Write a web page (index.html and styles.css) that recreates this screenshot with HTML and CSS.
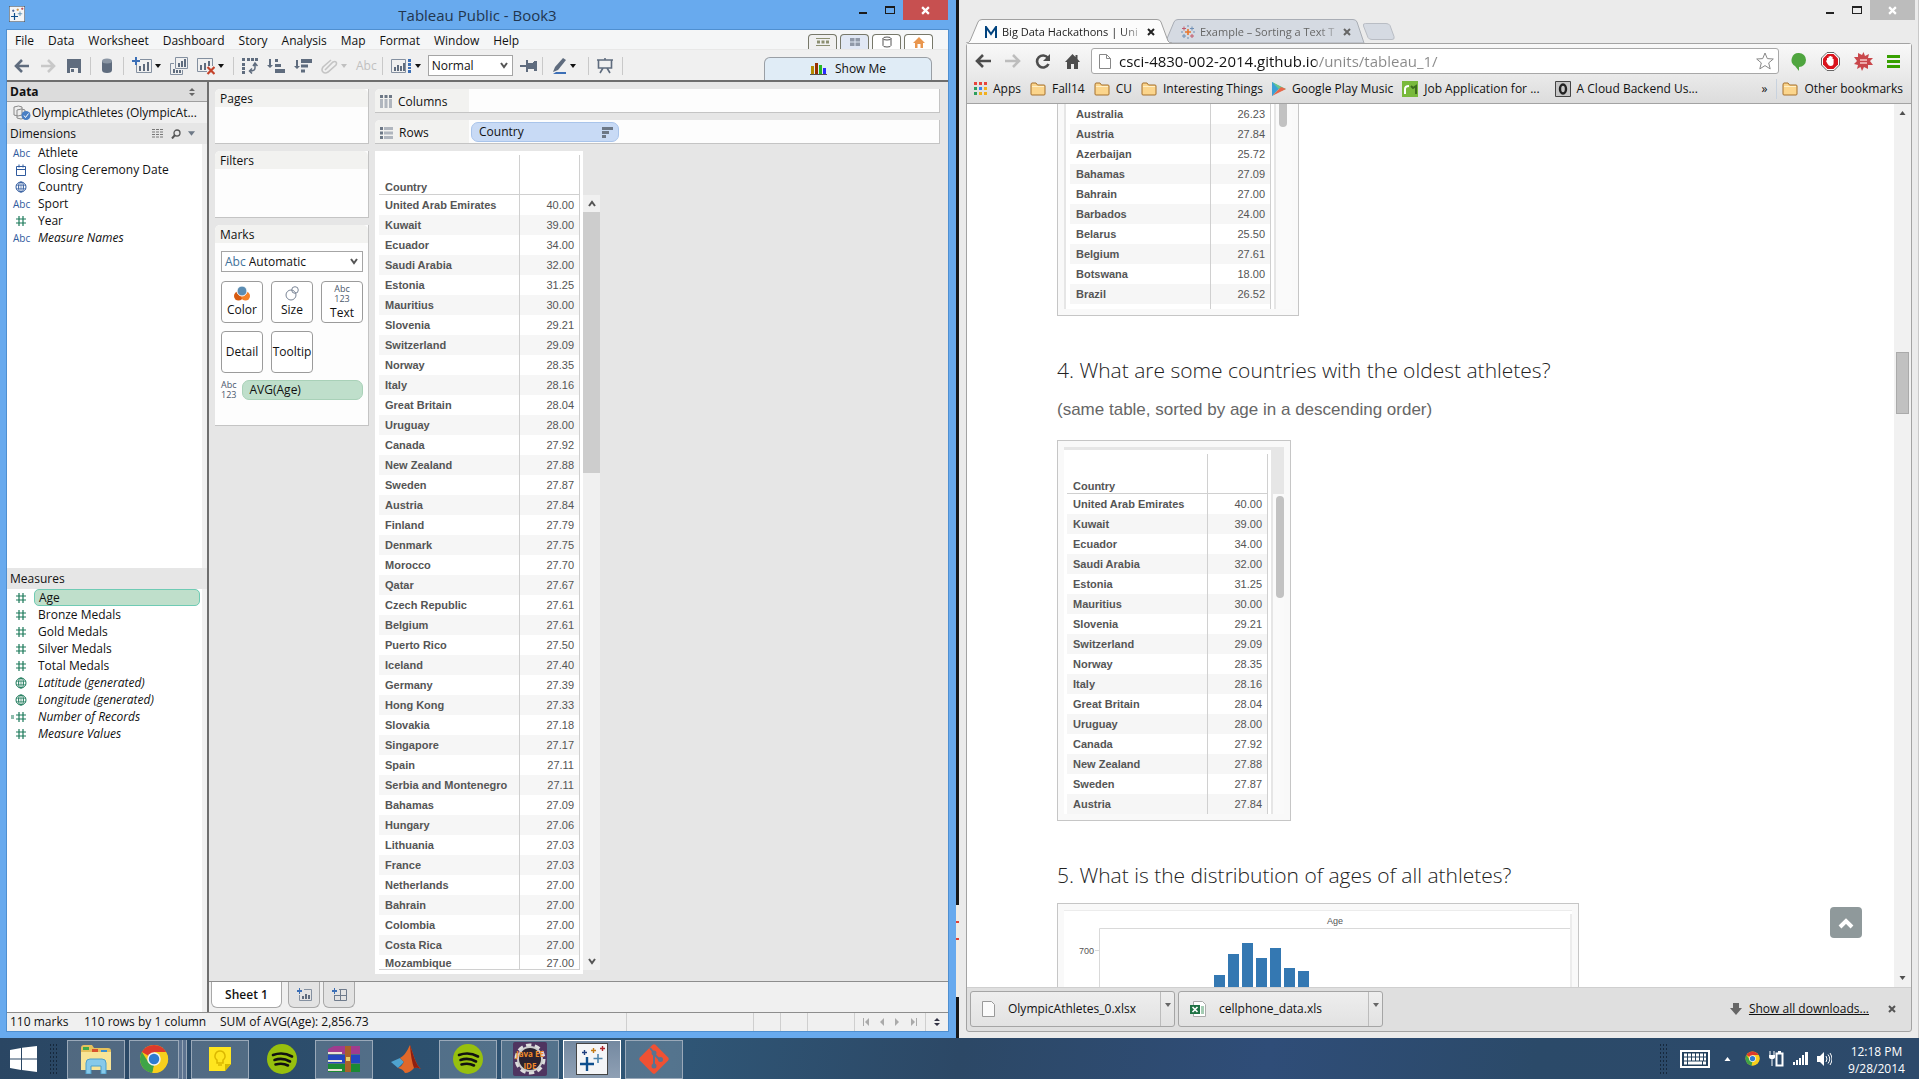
FILE: index.html
```html
<!DOCTYPE html>
<html lang="en">
<head>
<meta charset="utf-8">
<title>Tableau Public - Book3</title>
<link rel="stylesheet" href="styles.css">
</head>
<body>
<svg class="defs" aria-hidden="true">
  <symbol id="caret" viewBox="0 0 6 4"><path d="M0 0h6L3 4z" fill="currentColor"/></symbol>
  <symbol id="chevron" viewBox="0 0 8 7"><path d="M1 1l3 4 3-4" fill="none" stroke="currentColor" stroke-width="2"/></symbol>
  <symbol id="min" viewBox="0 0 10 10"><path d="M1 7h8v2H1z" fill="currentColor"/></symbol>
  <symbol id="max" viewBox="0 0 10 10"><path d="M0 1h10v8H0zM1 3v5h8V3z" fill="currentColor" fill-rule="evenodd"/></symbol>
  <symbol id="cross" viewBox="0 0 8 8"><path d="M1 1l6 6M7 1L1 7" stroke="currentColor" stroke-width="2" fill="none"/></symbol>
  <symbol id="hash" viewBox="0 0 12 12"><path d="M4 1v10M8 1v10M1 4h10M1 8h10" stroke="currentColor" fill="none" stroke-width="1.2"/></symbol>
  <symbol id="globe" viewBox="0 0 12 12"><g stroke="currentColor" fill="none"><circle cx="6" cy="6" r="5"/><ellipse cx="6" cy="6" rx="2.4" ry="5"/><path d="M1 4.2h10M1 7.8h10M6 1v10" stroke-width=".7"/></g></symbol>
  <symbol id="date" viewBox="0 0 12 12"><path d="M1.500 2.500h9v9h-9zM1.500 5.500h9M4 .5v3M8 .5v3" stroke="currentColor" fill="none"/></symbol>
  <symbol id="folder" viewBox="0 0 16 14"><path d="M1 3q0-2 1-2h4l1.500 2H14q1 0 1 1v8q0 1-1 1H2q-1 0-1-1z" fill="#fbd58c" stroke="#a5702c"/><path d="M2 4.500h12" stroke="#fff0c8"/></symbol>
  <symbol id="chrome" viewBox="0 0 28 28"><circle cx="14" cy="14" r="13" fill="#f8c715"/><path d="M14 14L2.700 7.500A13 13 0 0 1 25.300 7.500L14 8z" fill="#dc3a2c"/><path d="M2.700 7.500L8.800 17 14 20l-1.500 7A13 13 0 0 1 2.700 7.500z" fill="#3fa447"/><path d="M25.300 7.500H14v13l-1.500 6.500A13 13 0 0 0 25.300 7.500z" fill="#f8cf1d"/><circle cx="14" cy="14" r="6.300" fill="#f3f3f3"/><circle cx="14" cy="14" r="4.900" fill="#2e7bd0"/></symbol>
  <symbol id="spotify" viewBox="0 0 32 32"><circle cx="16" cy="16" r="15" fill="#97c00e"/><path d="M7 12q10-3.500 19 1.500M8.500 17q8-2.800 15.500 1.500M9.500 21.500q7-2 12.500 1" stroke="#111" stroke-width="2.600" fill="none" stroke-linecap="round"/></symbol>
  <symbol id="tableau" viewBox="0 0 32 32"><rect x=".5" y=".5" width="31" height="31" fill="#f4f5f7" stroke="#444"/><g fill="none"><path d="M11 14v14M4 21h14" stroke="#0f4f8e" stroke-width="2.400"/><path d="M22 11v9M17.500 15.500h9" stroke="#4f86ad" stroke-width="1.600"/><path d="M8.500 7v5M6 9.500h5" stroke="#1f3f7f" stroke-width="1.400"/><path d="M17.500 5v5M15 7.500h5" stroke="#c47a12" stroke-width="1.400"/><path d="M26.500 3v5M24 5.500h5" stroke="#b0252b" stroke-width="1.400"/></g></symbol>
  <symbol id="sortdesc" viewBox="0 0 18 16"><path d="M2 2h2v6h2L3 11 0 8h2zM7 1h11v4H7zM7 6.500h7v3H7zM7 11.500h4v3H7z" fill="currentColor"/></symbol>
</svg>

<main class="desktop">
  <section class="win tableau" aria-label="Tableau Public">
    <header class="titlebar">
      <svg class="app-icon" width="16" height="16"><use href="#tableau"/></svg>
      <h1>Tableau Public - Book3</h1>
      <div class="win-buttons">
        <button aria-label="Minimize"><svg width="10" height="10"><use href="#min"/></svg></button>
        <button aria-label="Maximize"><svg width="10" height="10"><use href="#max"/></svg></button>
        <button class="close" aria-label="Close"><svg width="9" height="9"><use href="#cross"/></svg></button>
      </div>
    </header>
    <div class="tableau-client">
      <nav class="menubar">
        <button>File</button><button>Data</button><button>Worksheet</button><button>Dashboard</button><button>Story</button><button>Analysis</button><button>Map</button><button>Format</button><button>Window</button><button>Help</button>
        <div class="mode-tabs">
          <button aria-label="Cards"><svg width="14" height="8" viewBox="0 0 14 8"><path d="M0 0h14v1H0zM0 7h14v1H0zM1 2.500h3v3H1zM5.500 2.500h3v3h-3zM10 2.500h3v3h-3z" fill="#8c8f72"/></svg></button>
          <button class="sel" aria-label="Grid"><svg width="10" height="8" viewBox="0 0 10 8"><path d="M0 0h4.500v3.500H0zM5.500 0H10v3.500H5.500zM0 4.500h4.500V8H0zM5.500 4.500H10V8H5.500z" fill="#9099a8"/></svg></button>
          <button class="white" aria-label="Data"><svg width="10" height="12" viewBox="0 0 10 12"><path d="M1 2.500v7q0 1.500 4 1.500t4-1.500v-7Q9 1 5 1T1 2.500q0 1.500 4 1.500t4-1.500" fill="none" stroke="#555"/></svg></button>
          <button class="white" aria-label="Home"><svg width="12" height="11" viewBox="0 0 12 11"><path d="M6 0l6 6h-2v5H7.500V7h-3v4H2V6H0z" fill="#e9964e"/></svg></button>
        </div>
      </nav>
      <div class="toolbar">
        <div class="tgroup first">
          <button aria-label="Back"><svg width="16" height="14" viewBox="0 0 16 14"><path d="M8 1L2 7l6 6M2 7h13" stroke="#5f6c7e" stroke-width="2.600" fill="none"/></svg></button>
          <button aria-label="Forward"><svg width="16" height="14" viewBox="0 0 16 14"><path d="M8 1l6 6-6 6M14 7H1" stroke="#c8c8c8" stroke-width="2.600" fill="none"/></svg></button>
          <button aria-label="Save"><svg width="16" height="14" viewBox="0 0 16 14"><path d="M1 0h14v14H1z" fill="#5f6c7e"/><path d="M4 9h8v5H4z" fill="#eee"/><path d="M5 10h3v3H5z" fill="#5f6c7e"/></svg></button>
        </div>
        <div class="tgroup data">
          <button aria-label="Connect to data"><svg width="12" height="15" viewBox="0 0 12 15"><path d="M1 3v9q0 3 5 3t5-3V3z" fill="#5f6c7e"/><ellipse cx="6" cy="3" rx="5" ry="2.500" fill="#8b96a4"/></svg></button>
        </div>
        <div class="tgroup">
          <button aria-label="New worksheet"><svg width="20" height="17" viewBox="0 0 20 17"><path d="M8 2.500h11.500v13H4.500V8" stroke="#8490a0" fill="none"/><path d="M7 9h2v5H7zM11 7h2v7h-2zM15 5h2v9h-2z" fill="#5f6c7e"/><path d="M3 0h2v3h3v2H5v3H3V5H0V3h3z" fill="#3c6fb6"/></svg><svg class="caret" width="6" height="4"><use href="#caret"/></svg></button>
          <button aria-label="Duplicate sheet"><svg width="18" height="18" viewBox="0 0 18 18"><path d="M5.500.5h12v11h-12zM4 6.500H.5v11h12V13" stroke="#8490a0" fill="none"/><path d="M8 6h2v4H8zM11 4h2v6h-2zM14 2h2v8h-2zM3 12h2v4H3zM6 13h2v3H6zM9 13h2v3H9z" fill="#5f6c7e"/></svg></button>
          <button aria-label="Clear sheet"><svg width="18" height="18" viewBox="0 0 18 18"><path d="M10 14.500H.5v-13h15V9" stroke="#8490a0" fill="none"/><path d="M3 8h2v5H3zM7 6h2v7H7zM11 4h2v5h-2z" fill="#5f6c7e"/><path d="M10.500 10l7 7M17.500 10l-7 7" stroke="#c4432b" stroke-width="2.200"/></svg><svg class="caret" width="6" height="4"><use href="#caret"/></svg></button>
        </div>
        <div class="tgroup sorting">
          <button aria-label="Swap"><svg width="16" height="16" viewBox="0 0 16 16"><path d="M0 0h3v3H0zM5 0h3v3H5zM9 0h3v3H9zM13 0h3v3h-3zM0 5h3v3H0zM0 9h3v3H0zM0 13h3v3H0z" fill="#5f6c7e"/><path d="M13 6v4q0 3-5 3M11 8l2-3 2.500 3M10 10.500L7.500 13l2.500 2.500" stroke="#5f6c7e" fill="none" stroke-width="1.500"/></svg></button>
          <button aria-label="Sort ascending"><svg width="18" height="16" viewBox="0 0 18 16"><path d="M2 1h2v6h2l-3 3-3-3h2zM8 1h3v3H8zM8 6h6v3H8zM8 11h10v4H8z" fill="#5f6c7e"/></svg></button>
          <button class="slate" aria-label="Sort descending"><svg width="18" height="16"><use href="#sortdesc"/></svg></button>
          <button class="faint" aria-label="Group"><svg width="17" height="16" viewBox="0 0 17 16"><path d="M4 12l8-8q2-1 3 0t0 3l-8 7q-3 2-5 0t0-5l8-7" stroke="#c4c4c4" fill="none" stroke-width="1.600"/></svg><svg class="caret" width="6" height="4"><use href="#caret"/></svg></button>
          <button class="faint">Abc</button>
        </div>
        <div class="tgroup fitting">
          <button aria-label="View cards"><svg width="21" height="16" viewBox="0 0 21 16"><path d="M.5 1.500h14v13H.5z" stroke="#8490a0" fill="none"/><path d="M3 9h2v4H3zM6 7h2v6H6zM9 8h2v5H9zM12 5h2v8h-2z" fill="#5f6c7e"/><path d="M17 1h3v3h-3zM17 5h3v3h-3zM17 9h3v2h-3zM17 12h3v3h-3z" fill="#3c6fb6"/></svg><svg class="caret" width="6" height="4"><use href="#caret"/></svg></button>
          <span class="dropdown fit"><select aria-label="Fit"><option>Normal</option></select><svg width="8" height="7"><use href="#chevron"/></svg></span>
          <button aria-label="Fix axes"><svg width="17" height="12" viewBox="0 0 17 12"><path d="M0 5h6v2H0zM6 0h2v3h5V2h1V1h3v10h-3V9H8v3H6z" fill="#5f6c7e"/></svg></button>
        </div>
        <div class="tgroup pen">
          <button aria-label="Highlight"><svg width="16" height="16" viewBox="0 0 16 16"><path d="M12 0l3 2-8 10-5 2 2-5z" fill="#5f6c7e"/><path d="M5 14h10v2H2z" fill="#3c6fb6"/></svg><svg class="caret" width="6" height="4"><use href="#caret"/></svg></button>
        </div>
        <div class="tgroup">
          <button aria-label="Presentation mode"><svg width="16" height="16" viewBox="0 0 16 16"><path d="M0 2h16M1.500 2v8h13V2M8 0v2M6 10l-3 5M10 10l3 5" stroke="#5f6c7e" fill="none" stroke-width="1.600"/></svg></button>
        </div>
        <button class="show-me"><svg width="17" height="12" viewBox="0 0 17 12"><path d="M1 3h3v8H1z" fill="#b58a00"/><path d="M5 0h3v11H5z" fill="#992f00"/><path d="M9 2h3v9H9z" fill="#25b525"/><path d="M13 5h3v6h-3z" fill="#2b2bff"/><path d="M0 11h17v1H0z" fill="#555"/></svg>Show Me</button>
      </div>

      <div class="workarea">
        <aside class="data-pane">
          <h2>Data <svg width="6" height="8" viewBox="0 0 6 8"><path d="M0 3h6L3 0zM0 5h6L3 8z" fill="#666"/></svg></h2>
          <div class="source"><svg width="18" height="15" viewBox="0 0 18 15"><path d="M1 2q5-2 8 0v8q-4 2-8 0zM4 5q5-2 8 0v8q-4 2-8 0z" fill="#eee" stroke="#888"/><circle cx="13" cy="10.500" r="4.500" fill="#4a7fc4"/><path d="M11 10.500l1.500 2 3-4" stroke="#fff" fill="none"/></svg>OlympicAthletes (OlympicAt...</div>
          <h3>Dimensions
            <span class="pane-tools"><svg width="12" height="9" viewBox="0 0 12 9"><path d="M0 .5h12M0 3h12M0 5.500h12M0 8h12" stroke="#777" stroke-dasharray="3 1"/></svg><svg width="10" height="10" viewBox="0 0 10 10"><circle cx="6" cy="4" r="3" fill="none" stroke="#555" stroke-width="1.300"/><path d="M4 6L1 9.500" stroke="#555" stroke-width="2"/></svg><svg width="7" height="5"><use href="#caret"/></svg></span>
          </h3>
          <ul class="fields dims">
            <li><i class="abc">Abc</i>Athlete</li>
            <li><i><svg width="12" height="12"><use href="#date"/></svg></i>Closing Ceremony Date</li>
            <li><i><svg width="12" height="12"><use href="#globe"/></svg></i>Country</li>
            <li><i class="abc">Abc</i>Sport</li>
            <li><i class="green"><svg width="12" height="12"><use href="#hash"/></svg></i>Year</li>
            <li><i class="abc">Abc</i><em>Measure Names</em></li>
          </ul>
          <h3>Measures</h3>
          <ul class="fields measures">
            <li class="picked"><i><svg width="12" height="12"><use href="#hash"/></svg></i><span>Age</span></li>
            <li><i><svg width="12" height="12"><use href="#hash"/></svg></i>Bronze Medals</li>
            <li><i><svg width="12" height="12"><use href="#hash"/></svg></i>Gold Medals</li>
            <li><i><svg width="12" height="12"><use href="#hash"/></svg></i>Silver Medals</li>
            <li><i><svg width="12" height="12"><use href="#hash"/></svg></i>Total Medals</li>
            <li><i><svg width="12" height="12"><use href="#globe"/></svg></i><em>Latitude (generated)</em></li>
            <li><i><svg width="12" height="12"><use href="#globe"/></svg></i><em>Longitude (generated)</em></li>
            <li><i class="calc"><svg width="16" height="12" viewBox="0 0 16 12"><path d="M0 5h3M0 7h3M8 1v10M12 1v10M5 4h10M5 8h10" stroke="currentColor" fill="none" stroke-width="1.200"/></svg></i><em>Number of Records</em></li>
            <li><i><svg width="12" height="12"><use href="#hash"/></svg></i><em>Measure Values</em></li>
          </ul>
        </aside>

        <div class="sheet">
          <div class="sheet-main">
            <div class="cards">
              <section class="card pages"><h4>Pages</h4></section>
              <section class="card filters"><h4>Filters</h4></section>
              <section class="card marks"><h4>Marks</h4>
                <span class="dropdown mark-type"><b>Abc</b><select aria-label="Mark type"><option>Automatic</option></select><svg width="8" height="7"><use href="#chevron"/></svg></span>
                <div class="mark-buttons">
                  <button><svg width="16" height="15" viewBox="0 0 16 15"><circle cx="4.500" cy="10" r="4.500" fill="#d65a10"/><circle cx="11.500" cy="10" r="4.500" fill="#f58228"/><circle cx="8" cy="5" r="5" fill="#5b8db3" stroke="#fff"/></svg>Color</button>
                  <button><svg width="14" height="15" viewBox="0 0 14 15"><g fill="none" stroke="#7a8596"><circle cx="6" cy="9" r="5"/><circle cx="10" cy="4" r="3.300"/></g></svg>Size</button>
                  <button><small>Abc<br>123</small>Text</button>
                  <button>Detail</button>
                  <button>Tooltip</button>
                </div>
                <div class="mark-pill"><small>Abc<br>123</small><span class="pill green-pill">AVG(Age)</span></div>
              </section>
            </div>
            <div class="canvas">
              <div class="shelf"><h4><svg width="12" height="13" viewBox="0 0 12 13"><path d="M0 0h3v3H0zM4.500 0h3v3h-3zM9 0h3v3H9z" fill="#6d7886"/><path d="M0 4h3v9H0zM4.500 4h3v9h-3zM9 4h3v9H9z" fill="#b0b6be"/></svg>Columns</h4></div>
              <div class="shelf"><h4><svg width="13" height="12" viewBox="0 0 13 12"><path d="M0 0h3v3H0zM0 4.500h3v3H0zM0 9h3v3H0z" fill="#6d7886"/><path d="M4 0h9v3H4zM4 4.500h9v3H4zM4 9h9v3H4z" fill="#b0b6be"/></svg>Rows</h4><span class="pill blue-pill">Country<svg width="11" height="11" viewBox="0 0 11 11"><path d="M0 0h11v3H0zM0 4h7v3H0zM0 8h4v3H0z" fill="#6d7886"/></svg></span></div>
              <div class="view">
                <div class="view-table"><div class="clip">
                <table class="viz">
                  <thead><tr><th>Country</th><td></td></tr></thead>
                  <tbody>
                  <tr><th>United Arab Emirates</th><td>40.00</td></tr>
                  <tr><th>Kuwait</th><td>39.00</td></tr>
                  <tr><th>Ecuador</th><td>34.00</td></tr>
                  <tr><th>Saudi Arabia</th><td>32.00</td></tr>
                  <tr><th>Estonia</th><td>31.25</td></tr>
                  <tr><th>Mauritius</th><td>30.00</td></tr>
                  <tr><th>Slovenia</th><td>29.21</td></tr>
                  <tr><th>Switzerland</th><td>29.09</td></tr>
                  <tr><th>Norway</th><td>28.35</td></tr>
                  <tr><th>Italy</th><td>28.16</td></tr>
                  <tr><th>Great Britain</th><td>28.04</td></tr>
                  <tr><th>Uruguay</th><td>28.00</td></tr>
                  <tr><th>Canada</th><td>27.92</td></tr>
                  <tr><th>New Zealand</th><td>27.88</td></tr>
                  <tr><th>Sweden</th><td>27.87</td></tr>
                  <tr><th>Austria</th><td>27.84</td></tr>
                  <tr><th>Finland</th><td>27.79</td></tr>
                  <tr><th>Denmark</th><td>27.75</td></tr>
                  <tr><th>Morocco</th><td>27.70</td></tr>
                  <tr><th>Qatar</th><td>27.67</td></tr>
                  <tr><th>Czech Republic</th><td>27.61</td></tr>
                  <tr><th>Belgium</th><td>27.61</td></tr>
                  <tr><th>Puerto Rico</th><td>27.50</td></tr>
                  <tr><th>Iceland</th><td>27.40</td></tr>
                  <tr><th>Germany</th><td>27.39</td></tr>
                  <tr><th>Hong Kong</th><td>27.33</td></tr>
                  <tr><th>Slovakia</th><td>27.18</td></tr>
                  <tr><th>Singapore</th><td>27.17</td></tr>
                  <tr><th>Spain</th><td>27.11</td></tr>
                  <tr><th>Serbia and Montenegro</th><td>27.11</td></tr>
                  <tr><th>Bahamas</th><td>27.09</td></tr>
                  <tr><th>Hungary</th><td>27.06</td></tr>
                  <tr><th>Lithuania</th><td>27.03</td></tr>
                  <tr><th>France</th><td>27.03</td></tr>
                  <tr><th>Netherlands</th><td>27.00</td></tr>
                  <tr><th>Bahrain</th><td>27.00</td></tr>
                  <tr><th>Colombia</th><td>27.00</td></tr>
                  <tr><th>Costa Rica</th><td>27.00</td></tr>
                  <tr class="partial"><th>Mozambique</th><td>27.00</td></tr>
                  </tbody>
                </table></div></div>
                <div class="scroll"><button aria-label="Scroll up"><svg class="flip" width="8" height="7"><use href="#chevron"/></svg></button><div class="thumb"></div><button aria-label="Scroll down"><svg width="8" height="7"><use href="#chevron"/></svg></button></div>
              </div>
            </div>
          </div>
          <div class="sheet-tabs">
            <button class="current">Sheet 1</button>
            <button aria-label="New worksheet"><svg width="15" height="13" viewBox="0 0 15 13"><path d="M7 1.500h7.500v11h-12V7" stroke="#8490a0" fill="none"/><path d="M5 8h2v3H5zM8 6h2v5H8zM11 7h2v4h-2z" fill="#5f6c7e"/><path d="M2 0h1v2h2v2H3v2H2V4H0V2h2z" fill="#3c6fb6"/></svg></button>
            <button aria-label="New dashboard"><svg width="15" height="13" viewBox="0 0 15 13"><path d="M7 1.500h7.500v11h-12V7M8.500 2v10M3 7.500h11" stroke="#6f7b8c" fill="none"/><path d="M2 0h1v2h2v2H3v2H2V4H0V2h2z" fill="#3c6fb6"/></svg></button>
          </div>
        </div>
      </div>
      <footer class="status">
        <span class="s1">110 marks</span><span class="s2">110 rows by 1 column</span><span class="s3">SUM of AVG(Age): 2,856.73</span>
        <i class="c1"></i><i class="c2"></i><i class="c2"></i><i class="c3"></i>
        <span class="pager">
          <button aria-label="First"><svg width="7" height="8" viewBox="0 0 7 8"><path d="M0 0h1v8H0zM6 0v8L2 4z" fill="#aaa"/></svg></button>
          <button aria-label="Previous"><svg width="5" height="8" viewBox="0 0 5 8"><path d="M4 0v8L0 4z" fill="#aaa"/></svg></button>
          <button aria-label="Next"><svg width="5" height="8" viewBox="0 0 5 8"><path d="M0 0v8l4-4z" fill="#aaa"/></svg></button>
          <button aria-label="Last"><svg width="7" height="8" viewBox="0 0 7 8"><path d="M6 0h1v8H6zM1 0v8l4-4z" fill="#aaa"/></svg></button>
        </span>
        <span class="sorter"><svg width="6" height="8" viewBox="0 0 6 8"><path d="M0 3h6L3 0zM0 5h6L3 8z" fill="#334"/></svg></span>
      </footer>
    </div>
  </section>

  <div class="behind"><div class="photo"></div></div>

  <section class="win chrome" aria-label="Chrome">
    <header class="tabstrip">
      <div class="tabs">
        <div class="tab active"><svg class="tab-shape" viewBox="0 0 206 24" preserveAspectRatio="none"><path d="M0 24q3 0 4-2L12 3q1-2.500 4-2.500h175q3 0 4 2.500l7 19q1 2 4 2" fill="#fcfcfc" stroke="#a0a0a0"/></svg><svg width="12" height="12" viewBox="0 0 12 12"><path d="M1 12V1l5 7 5-7v11" fill="none" stroke="#00427e" stroke-width="2"/></svg><span>Big Data Hackathons | Uni</span><button aria-label="Close tab"><svg width="8" height="8"><use href="#cross"/></svg></button></div>
        <div class="tab"><svg class="tab-shape" viewBox="0 0 206 24" preserveAspectRatio="none"><path d="M4 22L12 3q1-2.500 4-2.500h175q3 0 4 2.500l7 21H8z" fill="#d5dae2" stroke="#a9adb5"/></svg><svg width="14" height="14" viewBox="0 0 14 14"><path d="M7 4v6M4 7h6" stroke="#e8762c" stroke-width="1.600"/><path d="M3 1.500v4M1 3.500h4M11 9v4M9 11h4" stroke="#c2596b"/><path d="M11 1.500v4M9 3.500h4M3 9v4M1 11h4M7 0v2M7 12v2M0 7h2M12 7h2" stroke="#6f8fb5"/></svg><span>Example – Sorting a Text T</span><button aria-label="Close tab"><svg width="8" height="8"><use href="#cross"/></svg></button></div>
        <button class="new-tab" aria-label="New tab"><svg width="34" height="17" viewBox="0 0 34 17"><path d="M3.500.5H24q3 0 4 2l4 11q1 3-2 3H10q-3 0-4-2L1.500 3q-1-2.500 2-2.500z" fill="#d5dae2" stroke="#b9bdc4"/></svg></button>
      </div>
      <div class="win-buttons">
        <button aria-label="Minimize"><svg width="10" height="10"><use href="#min"/></svg></button>
        <button aria-label="Maximize"><svg width="10" height="10"><use href="#max"/></svg></button>
        <button class="close" aria-label="Close"><svg width="9" height="9"><use href="#cross"/></svg></button>
      </div>
    </header>
    <div class="chrome-client">
      <div class="browser-head">
        <div class="navbar">
          <button aria-label="Back"><svg width="16" height="14" viewBox="0 0 16 14"><path d="M8 1L2 7l6 6M2 7h14" stroke="#4d4d4d" stroke-width="2.600" fill="none"/></svg></button>
          <button aria-label="Forward"><svg width="16" height="14" viewBox="0 0 16 14"><path d="M8 1l6 6-6 6M14 7H0" stroke="#bdbdbd" stroke-width="2.600" fill="none"/></svg></button>
          <button aria-label="Reload"><svg width="16" height="15" viewBox="0 0 16 15"><path d="M13 4a6 6 0 1 0 .5 6" stroke="#4d4d4d" stroke-width="2.600" fill="none"/><path d="M15 0v7H8z" fill="#4d4d4d"/></svg></button>
          <button aria-label="Home"><svg width="15" height="15" viewBox="0 0 15 15"><path d="M7.500 0l3 3V1h2v4L15 8h-2v7H9v-5H6v5H2V8H0z" fill="#4d4d4d"/></svg></button>
          <div class="omnibox"><svg width="12" height="15" viewBox="0 0 12 15"><path d="M.5.5h7l4 4v10H.5zM7.500.5v4h4" fill="#fff" stroke="#888"/></svg><input type="text" aria-label="Address" value="csci-4830-002-2014.github.io/units/tableau_1/"><svg width="18" height="18" viewBox="0 0 18 18"><path d="M9 1l2.300 5.600 6 .4-4.600 3.900 1.500 6L9 13.600 3.800 16.900l1.500-6L.7 7l6-.4z" fill="#fff" stroke="#888"/></svg></div>
          <button aria-label="Hangouts"><svg width="16" height="19" viewBox="0 0 16 19"><path d="M8 1a7 7 0 1 1 0 14v4L4 14A7 7 0 0 1 8 1z" fill="#4fa53f"/></svg></button>
          <button aria-label="AdBlock"><svg width="19" height="19" viewBox="0 0 19 19"><path d="M6 .5h7L18.500 6v7L13 18.500H6L.5 13V6z" fill="#fff" stroke="#666"/><path d="M6.500 2h6L17 6.500v6L12.500 17h-6L2 12.500v-6z" fill="#d9131c"/><path d="M6 8V6h1.500V4.500h1.300V4h1.500v.8h1.300V7h1v4q0 3-3 3-2 0-3-2L5 9z" fill="#fff"/></svg></button>
          <button aria-label="Bug extension"><svg width="19" height="19" viewBox="0 0 19 19"><path d="M9.500 0L11 4l4-2-1 4 5 0-3 3 3 4-5 0 0 4-4-2-2 4-1.500-4L3 17l1-4-4-1 3-3L0 5l4 0L4 1l4 2z" fill="#c9474b"/><path d="M6 8h7M6 11h7" stroke="#f7caca" stroke-width="1.500"/></svg></button>
          <button aria-label="Chrome menu"><svg width="13" height="13" viewBox="0 0 13 13"><path d="M0 0h13v3H0zM0 5h13v3H0zM0 10h13v3H0z" fill="#37a000"/></svg></button>
        </div>
        <nav class="bookmarks">
          <a href="#apps"><svg width="13" height="13" viewBox="0 0 13 13"><path d="M0 0h3v3H0zM5 0h3v3H5zM10 0h3v3h-3z" fill="#e8453c"/><path d="M0 5h3v3H0zM0 10h3v3H0z" fill="#2d9f5c"/><path d="M5 5h3v3H5z" fill="#3b82f0"/><path d="M10 5h3v3h-3zM5 10h3v3H5zM10 10h3v3h-3z" fill="#f2b01e"/></svg>Apps</a>
          <a href="#fall14"><svg width="16" height="14"><use href="#folder"/></svg>Fall14</a>
          <a href="#cu"><svg width="16" height="14"><use href="#folder"/></svg>CU</a>
          <a href="#things"><svg width="16" height="14"><use href="#folder"/></svg>Interesting Things</a>
          <a href="#play"><svg width="14" height="14" viewBox="0 0 14 14"><path d="M0 0l9 5-9 9z" fill="#36b8c9"/><path d="M0 0l14 7-5 2z" fill="#6fc48a"/><path d="M0 14l14-7-5-2z" fill="#e8674a"/><path d="M0 0v14l6-7z" fill="#3c9fd6"/></svg>Google Play Music</a>
          <a href="#job"><svg width="16" height="16" viewBox="0 0 16 16"><path d="M0 0h16v16H0z" fill="#79b93c"/><path d="M3 13V8q0-3 4-3" stroke="#fff" stroke-width="2" fill="none"/><path d="M9 5l2 2 3-2v8" stroke="#3d6d1d" stroke-width="2" fill="none"/></svg>Job Application for ...</a>
          <a class="wide" href="#cloud"><svg width="16" height="16" viewBox="0 0 16 16"><path d="M.5.5h15v15H.5z" fill="#c6c6c6" stroke="#444"/><ellipse cx="8" cy="8" rx="3" ry="4.500" fill="none" stroke="#222" stroke-width="2.400"/></svg>A Cloud Backend Us...</a>
          <button class="more" aria-label="More bookmarks">»</button>
          <a class="other" href="#other"><svg width="16" height="14"><use href="#folder"/></svg>Other bookmarks</a>
        </nav>
      </div>
      <div class="viewport">
        <article class="page">
          <div class="embed first"><div class="embed-in">
            <div class="embed-table"><table class="viz">
              <tbody>
              <tr><th>Australia</th><td>26.23</td></tr>
              <tr><th>Austria</th><td>27.84</td></tr>
              <tr><th>Azerbaijan</th><td>25.72</td></tr>
              <tr><th>Bahamas</th><td>27.09</td></tr>
              <tr><th>Bahrain</th><td>27.00</td></tr>
              <tr><th>Barbados</th><td>24.00</td></tr>
              <tr><th>Belarus</th><td>25.50</td></tr>
              <tr><th>Belgium</th><td>27.61</td></tr>
              <tr><th>Botswana</th><td>18.00</td></tr>
              <tr><th>Brazil</th><td>26.52</td></tr>
              <tr class="sliver"><th></th><td></td></tr>
              </tbody>
            </table></div>
            <div class="track"><div class="thumb"></div></div>
          </div></div>
          <h2>4. What are some countries with the oldest athletes?</h2>
          <p>(same table, sorted by age in a descending order)</p>
          <div class="embed second"><div class="embed-in">
            <div class="embed-table"><table class="viz">
              <thead><tr><th>Country</th><td></td></tr></thead>
              <tbody>
              <tr><th>United Arab Emirates</th><td>40.00</td></tr>
              <tr><th>Kuwait</th><td>39.00</td></tr>
              <tr><th>Ecuador</th><td>34.00</td></tr>
              <tr><th>Saudi Arabia</th><td>32.00</td></tr>
              <tr><th>Estonia</th><td>31.25</td></tr>
              <tr><th>Mauritius</th><td>30.00</td></tr>
              <tr><th>Slovenia</th><td>29.21</td></tr>
              <tr><th>Switzerland</th><td>29.09</td></tr>
              <tr><th>Norway</th><td>28.35</td></tr>
              <tr><th>Italy</th><td>28.16</td></tr>
              <tr><th>Great Britain</th><td>28.04</td></tr>
              <tr><th>Uruguay</th><td>28.00</td></tr>
              <tr><th>Canada</th><td>27.92</td></tr>
              <tr><th>New Zealand</th><td>27.88</td></tr>
              <tr><th>Sweden</th><td>27.87</td></tr>
              <tr><th>Austria</th><td>27.84</td></tr>
              </tbody>
            </table></div>
            <div class="track"><div class="thumb"></div></div>
          </div></div>
          <h2>5. What is the distribution of ages of all athletes?</h2>
          <div class="embed chart"><svg width="508" height="240" viewBox="0 0 508 240">
            <path d="M0 0h508v240H0z" fill="#fff"/><path d="M0 0h508v1H0zM506 4h2v236h-2z" fill="#ececec"/>
            <path d="M35.500 240V18.500H506M31 40.500h4" stroke="#d9d9d9" fill="none"/>
            <text x="271" y="14" text-anchor="middle">Age</text><text x="30" y="44" text-anchor="end">700</text>
            <g fill="#3478b2"><path d="M150 65h11v175h-11z"/><path d="M164 44h11v196h-11z"/><path d="M178 33h11v207h-11z"/><path d="M192 48h11v192h-11z"/><path d="M206 38h11v202h-11z"/><path d="M220 58h11v182h-11z"/><path d="M234 61h11v179h-11z"/></g>
          </svg></div>
        </article>
        <button class="to-top" aria-label="Back to top"><svg width="16" height="12" viewBox="0 0 16 12"><path d="M2 10l6-6 6 6" fill="none" stroke="#fff" stroke-width="4"/></svg></button>
        <div class="page-scroll"><svg class="flip" width="7" height="4"><use href="#caret"/></svg><div class="thumb"></div><svg width="7" height="4"><use href="#caret"/></svg></div>
      </div>
      <footer class="shelf-dl">
        <div class="dl"><button><svg width="13" height="16" viewBox="0 0 13 16"><path d="M.5.5h9l3 3v12H.5z" fill="#fafafa" stroke="#999"/></svg>OlympicAthletes_0.xlsx</button><button class="dl-menu" aria-label="Options"><svg width="6" height="4"><use href="#caret"/></svg></button></div>
        <div class="dl"><button><svg width="16" height="16" viewBox="0 0 16 16"><path d="M3.500.5h9l3 3v12h-12z" fill="#fff" stroke="#aaa"/><path d="M11 6h3M11 8h3M11 10h3M11 12h3" stroke="#4a9a68"/><path d="M0 4h10v9H0z" fill="#1f7244"/><path d="M2.500 6l5 5M7.500 6l-5 5" stroke="#fff" stroke-width="1.600"/></svg>cellphone_data.xls</button><button class="dl-menu" aria-label="Options"><svg width="6" height="4"><use href="#caret"/></svg></button></div>
        <a href="#downloads"><svg width="12" height="12" viewBox="0 0 12 12"><path d="M3 0h6v5h3l-6 7-6-7h3z" fill="#666"/></svg><span>Show all downloads...</span></a>
        <button class="dl-close" aria-label="Close downloads"><svg width="8" height="8"><use href="#cross"/></svg></button>
      </footer>
    </div>
  </section>
</main>

<footer class="taskbar">
  <button class="start" aria-label="Start"><svg width="27" height="26" viewBox="0 0 27 26"><path d="M0 4l11-2v10.500H0zM12 1.800L27 0v12.500H12zM0 13.500h11V24L0 22zM12 13.500h15V26l-15-2z" fill="#fff"/></svg></button>
  <i class="grip"></i>
  <div class="tasks">
    <button class="task" aria-label="File Explorer"><svg width="34" height="30" viewBox="0 0 34 30"><path d="M2 4q0-3 3-3h8l2 3h14q3 0 3 3v18H2z" fill="#e6c15c"/><path d="M4 3h6v3H4z" fill="#3da84a"/><path d="M13 5h6v3h-6z" fill="#d9532c"/><path d="M22 6h6v3h-6z" fill="#3c8fd0"/><path d="M2 8h30v18H2z" fill="#f8e496"/><path d="M7 30V19q0-4 4-4h12q4 0 4 4v11h-5v-8H12v8z" fill="#86c9ea" stroke="#4d9fca"/></svg></button>
    <button class="task stack" aria-label="Chrome"><svg width="30" height="30"><use href="#chrome"/></svg></button>
    <button class="task" aria-label="Keep"><svg width="26" height="26" viewBox="0 0 26 26"><path d="M2 1h22v17l-6 7H2z" fill="#ffe51f"/><path d="M24 18l-6 7v-7z" fill="#d5b900"/><path d="M13 5a5 5 0 0 1 3 9v3h-6v-3a5 5 0 0 1 3-9zM11 19h4" fill="none" stroke="#dbb800" stroke-width="1.500"/></svg></button>
    <button class="task flat" aria-label="Spotify"><svg width="32" height="32"><use href="#spotify"/></svg></button>
    <button class="task" aria-label="WinRAR"><svg width="34" height="28" viewBox="0 0 34 28"><path d="M1 4l6-3h26v8H1z" fill="#a03c8e"/><path d="M1 10h32v8H1z" fill="#2346c0"/><path d="M1 19h32v8H1z" fill="#1b8a34"/><path d="M1 7h14v2H1zM1 15h14v2H1zM1 24h14v2H1z" fill="#e9e3d4"/><path d="M18 1h6v26h-6z" fill="#a9612a"/><path d="M19 12h4v4h-4z" fill="#e8cf6a"/></svg></button>
    <button class="task flat" aria-label="MATLAB"><svg width="32" height="30" viewBox="0 0 32 30"><path d="M1 18l9-4 4 4-6 6z" fill="#4fa3cf"/><path d="M10 14q5-2 10-13l4 12q3 9 7 12-4-2-7-1-4 5-9 5-2-4-7-5 4-2 6-6z" fill="#e0682a"/><path d="M20 1l4 12q3 9 7 12-4-2-7-1-3-8-4-23z" fill="#8f1f10"/></svg></button>
    <button class="task" aria-label="Spotify"><svg width="32" height="32"><use href="#spotify"/></svg></button>
    <button class="task" aria-label="Eclipse Java EE"><svg width="34" height="34" viewBox="0 0 34 34"><rect width="34" height="34" rx="2" fill="#4f3560"/><circle cx="17" cy="17" r="13" fill="none" stroke="#ddd" stroke-width="5" stroke-dasharray="5 3.170"/><circle cx="17" cy="17" r="12" fill="#2a2230" stroke="#ccc" stroke-width="2"/><g class="java"><text x="17" y="15">Java EE</text><text x="17" y="27">IDE</text></g></svg></button>
    <button class="task now" aria-label="Tableau"><svg width="32" height="32"><use href="#tableau"/></svg></button>
    <button class="task" aria-label="Git"><svg width="34" height="34" viewBox="0 0 34 34"><rect x="6" y="6" width="22" height="22" rx="2" transform="rotate(45 17 17)" fill="#f05133"/><path d="M13 6l4 5v13M17 12l6 6" stroke="#5a7390" stroke-width="2" fill="none"/><g fill="#5a7390"><circle cx="17" cy="11" r="2.500"/><circle cx="17" cy="24" r="2.500"/><circle cx="23.500" cy="17.500" r="2.500"/></g></svg></button>
  </div>
  <div class="tray">
    <i class="grip"></i>
    <svg width="30" height="18" viewBox="0 0 30 18"><path d="M1 1h28v16H1z" fill="#23405c" stroke="#fff" stroke-width="2"/><path d="M4 5h22M4 9h22" stroke="#fff" stroke-width="3" stroke-dasharray="3 1"/><path d="M4 13h3M8 13h14M23 13h3" stroke="#fff" stroke-width="3"/></svg>
    <svg class="flip up" width="7" height="4"><use href="#caret"/></svg>
    <svg width="15" height="15"><use href="#chrome"/></svg>
    <svg width="15" height="16" viewBox="0 0 15 16"><path d="M7.500 2.500h6v12h-6zM9 1h3" stroke="#fff" fill="none" stroke-width="2"/><path d="M1 0v4M5 0v4M3 8v7" stroke="#fff"/><path d="M0 4h6v2q0 2-3 2T0 6z" fill="#fff"/></svg>
    <svg width="15" height="13" viewBox="0 0 15 13"><path d="M0 10h2v3H0zM3 8h2v5H3zM6 6h2v7H6zM9 3h2v10H9zM12 0h3v13h-3z" fill="#fff"/></svg>
    <svg width="15" height="14" viewBox="0 0 15 14"><path d="M0 4h3l4-4v14l-4-4H0z" fill="#fff"/><path d="M9 4q2 3 0 6M11 2.500q3.500 4.500 0 9M13 1q4 6 0 12" stroke="#fff" fill="none"/></svg>
    <div class="clock"><time>12:18 PM</time><time>9/28/2014</time></div>
  </div>
</footer>
</body>
</html>
```
FILE: styles.css
```css
* { box-sizing: border-box; }
body {
  margin: 0;
  height: 100vh;
  display: flex;
  flex-direction: column;
  overflow: hidden;
  font: 12px/16px "Open Sans", "Noto Sans", sans-serif;
  color: #111;
}
h1, h2, h3, h4, p, ul { margin: 0; padding: 0; font-weight: 400; font-size: 12px; }
ul { list-style: none; }
button, select, input { font: inherit; color: inherit; background: none; border: 0; padding: 0; margin: 0; }
button { display: flex; align-items: center; justify-content: center; }
svg { display: block; flex: none; }
a { color: inherit; text-decoration: none; }
i { font-style: normal; }
.defs { position: absolute; width: 0; height: 0; }
.flip { transform: scaleY(-1); }

.desktop { flex: 1; min-height: 0; display: grid; grid-template-columns: 956fr 3fr 960fr; grid-template-rows: minmax(0, 1fr); }
.win { display: flex; flex-direction: column; min-width: 0; min-height: 0; }
.behind { background: #16181b; display: flex; flex-direction: column; justify-content: flex-end; padding-bottom: 41px; }
.photo { height: 92px; background: linear-gradient(#efece6 16px, #e0433a 16px 18px, #efece6 18px 33px, #e0433a 33px 35px, #efece6 35px); }

.win-buttons { display: flex; height: 20px; }
.win-buttons button { width: 27px; }
.win-buttons .close { width: 45px; color: #fff; }

/* Tableau window */
.tableau { background: #68aaee; padding: 0 8px 7px 7px; }
.titlebar { height: 30px; display: grid; grid-template-columns: 1fr auto 1fr; color: #22364f; }
.titlebar .app-icon { margin: 6px 2px; }
.titlebar h1 { font-size: 15px; line-height: 30px; }
.titlebar .win-buttons { justify-self: end; color: #1b1b1b; }
.titlebar .close { background: #c75050; }
.tableau-client { flex: 1; min-height: 0; display: flex; flex-direction: column; background: #f0f0f0; outline: 1px solid #4f8fd0; }
.menubar { height: 20px; display: flex; gap: 14px; padding: 0 15px 0 8px; background: #f5f6f7; border-bottom: 1px solid #e8e8e8; }
.menubar > button { padding-top: 2px; }
.mode-tabs { margin-left: auto; display: flex; gap: 3px; padding-top: 4px; }
.mode-tabs button { width: 29px; border: 1px solid #77786a; border-bottom: 0; border-radius: 4px 4px 0 0; background: #f0f0f0; }
.mode-tabs .sel { background: #e1e8f5; }
.mode-tabs .white { background: #fff; }
.toolbar { height: 32px; display: flex; align-items: center; padding-top: 1px; border-bottom: 2px solid #6e6e6e; }
.tgroup { height: 18px; display: flex; align-items: center; gap: 9px; padding: 0 9px 0 8px; border-right: 1px solid #c9c9c9; }
.tgroup.first { gap: 10px; padding: 0 8px 0 7px; }
.tgroup.data { padding: 0 10px; }
.tgroup.sorting { padding-right: 5px; }
.tgroup.fitting { gap: 7px; padding-right: 5px; }
.tgroup.pen { padding-right: 12px; }
.tgroup button { gap: 3px; }
.tgroup .slate { color: #5f6c7e; }
.tgroup .faint { color: #c0c0c0; }
.dropdown { display: flex; align-items: center; background: #fff; border: 1px solid #a5a5a5; height: 21px; padding: 0 4px 0 3px; color: #111; }
.dropdown select { appearance: none; flex: 1; min-width: 0; outline: 0; }
.dropdown svg { color: #555; }
.dropdown.fit { width: 85px; }
.show-me { margin: 6px 16px 0 auto; align-self: stretch; width: 168px; gap: 8px; background: #e0ecf6; border: 1px solid #9a9fa5; border-bottom: 0; border-radius: 6px 6px 0 0; }

.workarea { flex: 1; min-height: 0; display: grid; grid-template-columns: 202px minmax(0, 1fr); grid-template-rows: minmax(0, 1fr); }
.data-pane { display: flex; flex-direction: column; border-right: 2px solid #6e6e6e; background: #f0f0f0; }
.data-pane h2, .data-pane h3 { display: flex; align-items: center; justify-content: space-between; height: 21px; padding: 0 12px 0 3px; background: #e6e6e6; flex: none; }
.data-pane h2 { font-weight: 700; background: #dcdcdc; border-bottom: 1px solid #9e9e9e; height: 20px; }
.source { display: flex; align-items: center; gap: 1px; height: 21px; padding-left: 6px; white-space: nowrap; overflow: hidden; }
.pane-tools { display: flex; align-items: center; gap: 7px; color: #6d7886; }
.fields { background: #fff; margin-right: 5px; white-space: nowrap; }
.dims { height: 424px; flex: none; }
.measures { flex: 1; }
.fields li { display: flex; align-items: center; height: 17px; }
.fields i { width: 31px; padding-left: 8px; color: #2f5a9e; flex: none; }
.fields .abc { padding-left: 6px; font-size: 10px; }
.fields .green, .measures i { color: #1c7a5a; }
.measures .calc { padding-left: 4px; }
.picked span { flex: 1; height: 17px; line-height: 16px; margin: 0 2px 0 -4px; padding-left: 4px; background: #bfdfcb; border: 1px solid #6fcbb4; border-radius: 5px; }

.sheet { display: flex; flex-direction: column; min-height: 0; background: #e6e6e6; }
.sheet-main { flex: 1; min-height: 0; display: flex; gap: 6px; padding: 7px 8px 7px 6px; }
.cards { width: 154px; flex: none; display: flex; flex-direction: column; gap: 7px; }
.card, .shelf { background: #fdfdfd; border-radius: 5px 0 0 0; border-right: 1px solid #c4c4c4; border-bottom: 1px solid #c4c4c4; overflow: hidden; flex: none; }
.card h4 { height: 18px; line-height: 20px; padding-left: 5px; background: #f2f2f0; border-radius: 5px 5px 0 0; }
.pages { height: 55px; }
.filters { height: 67px; }
.marks { height: 201px; }
.mark-type { margin: 8px 5px 9px 6px; }
.mark-type b { font-weight: 400; color: #3f7199; margin-right: 3px; }
.mark-buttons { display: grid; grid-template-columns: repeat(3, 42px); gap: 8px; padding: 0 6px; }
.mark-buttons button { height: 42px; flex-direction: column; gap: 1px; border: 1px solid #9b9b9b; border-radius: 4px; background: #fff; }
small { font-size: 9px; line-height: 10px; color: #4b586c; text-align: center; }
.mark-pill { display: flex; align-items: center; gap: 5px; padding: 7px 5px 0 6px; }
.pill { display: flex; align-items: center; justify-content: space-between; height: 20px; border-radius: 7px; padding: 0 5px 0 7px; }
.green-pill { flex: 1; background: #bfdfcb; border: 1px solid #a9d1b8; }
.blue-pill { width: 148px; margin: 2px; background: #c8daf5; border: 1px solid #a9c4ea; }
.canvas { flex: 1; min-width: 0; display: flex; flex-direction: column; gap: 7px; }
.shelf { display: flex; height: 24px; }
.shelf h4 { width: 94px; display: flex; align-items: center; gap: 6px; padding: 2px 0 0 5px; background: #f2f2f0; }
.view { flex: 1; min-height: 0; display: flex; }
.view-table { width: 208px; padding: 4px 3px 4px 4px; background: #fff; display: flex; }
.clip { overflow: hidden; flex: 1; border-bottom: 1px solid #d0d0d0; }
.scroll { width: 17px; margin: 44px 0 4px; background: #f0f0f0; display: flex; flex-direction: column; color: #555; }
.scroll button { height: 17px; }
.scroll .thumb { height: 261px; margin-bottom: auto; background: #cdcdcd; }

.viz { border-spacing: 0; width: 201px; table-layout: fixed; font: 11px/20px "Liberation Sans", Arial, sans-serif; color: #555; }
.viz th, .viz td { padding: 0 5px 0 6px; height: 20px; border-right: 1px solid #d0d0d0; white-space: nowrap; }
.viz th { width: 141px; text-align: left; }
.viz td { text-align: right; }
.viz thead th, .viz thead td { height: 40px; border-bottom: 1px solid #d0d0d0; vertical-align: bottom; line-height: 13px; }
.viz tbody tr:nth-child(even) { background: #f6f6f6; }
.viz .partial th, .viz .partial td { height: 15px; line-height: 16px; }
.viz .sliver th, .viz .sliver td { height: 5px; }

.sheet-tabs { height: 31px; flex: none; display: flex; gap: 3px; padding: 0 2px; background: #f0f0f0; border-top: 1px solid #8d8d8d; }
.sheet-tabs button { width: 32px; height: 26px; background: #e3e3e3; border: 1px solid #a8a8a8; border-top: 0; border-radius: 0 0 6px 6px; }
.sheet-tabs .current { width: 71px; margin-right: 3px; background: #fff; font-weight: 600; }
.status { height: 19px; display: flex; align-items: center; border-top: 1px solid #8d8d8d; padding-left: 3px; }
.status .s1 { width: 74px; }
.status .s2 { width: 136px; }
.status .s3 { flex: 1; }
.status > i, .pager, .sorter { align-self: stretch; border-left: 1px solid #cfcfcf; }
.status .c1 { width: 127px; }
.status .c2 { width: 27px; }
.status .c3 { width: 47px; }
.pager { width: 71px; display: flex; align-items: center; justify-content: space-between; padding: 0 8px; }
.sorter { width: 23px; display: flex; align-items: center; justify-content: center; }

/* Chrome window */
.chrome { background: #ebebeb; padding: 0 6px 6px 7px; border-right: 1px solid #c9c9c9; }
.tabstrip { height: 43px; display: flex; justify-content: space-between; flex: none; }
.tabstrip .win-buttons { color: #222; margin-right: -3px; }
.tabstrip .close { background: #bcbcbc; }
.tabs { display: flex; align-items: flex-end; }
.tab { position: relative; width: 206px; height: 24px; margin-right: -10px; display: flex; align-items: center; gap: 5px; padding: 2px 17px 0 19px; color: #666; font-size: 11px; }
.tab > * { position: relative; }
.tab .tab-shape { position: absolute; inset: 0; width: 100%; height: 100%; }
.tab.active { z-index: 1; color: #222; }
.tab span { flex: 1; white-space: nowrap; mask-image: linear-gradient(to right, #000 118px, rgba(0, 0, 0, .2) 140px); }
.new-tab { margin: 0 0 3px 4px; }
.chrome-client { flex: 1; min-height: 0; display: flex; flex-direction: column; border: 1px solid #a3a3a3; border-radius: 3px; background: #dfdfdf; }
.browser-head { height: 60px; flex: none; background: linear-gradient(#f9f9f9, #dcdcdc); border-bottom: 1px solid #a3a3a3; }
.navbar { display: flex; align-items: center; gap: 14px; height: 34px; padding: 0 11px 0 8px; }
.omnibox { flex: 1; height: 26px; margin-left: -3px; margin-right: -2px; display: flex; align-items: center; gap: 8px; padding: 0 4px 0 7px; background: #fff; border: 1px solid #a8a8a8; border-radius: 3px; }
.omnibox input { flex: 1; min-width: 0; font-size: 15px; line-height: 22px; outline: 0; color: transparent; background: linear-gradient(to right, #111 197px, #888 197px); background-clip: text; -webkit-background-clip: text; }
.bookmarks { display: flex; align-items: center; gap: 9px; height: 21px; padding: 0 8px 0 7px; white-space: nowrap; }
.bookmarks a { display: flex; align-items: center; gap: 6px; }
.bookmarks .wide { margin-left: 6px; }
.bookmarks .more { margin-left: auto; }
.bookmarks .other { border-left: 1px solid #c8d2de; padding-left: 5px; height: 20px; }
.viewport { position: relative; flex: 1; min-height: 0; display: flex; background: #fff; overflow: hidden; }
.page { flex: 1; min-width: 0; padding-left: 90px; display: flex; flex-direction: column; align-items: flex-start; }
.page > * { flex: none; }
.page h2 { font: 300 21px/28px "Open Sans", sans-serif; color: #222; margin: 40px 0 14px; }
.page p { font: 17px/24px "Liberation Sans", Arial, sans-serif; color: #666; margin-bottom: 18px; }
.embed { border: 1px solid #c6c6c6; background: #f9f9f9; padding: 6px; }
.embed.first { border-top: 0; padding-top: 0; }
.embed-in { display: flex; background: #e6e6e6; }
.embed-table { background: #fff; padding: 4px 3px 0; }
.second .embed-in { padding-top: 3px; }
.first .embed-in { padding-left: 2px; }
.first .embed-table { padding: 0 3px 0 4px; }
.track { width: 13px; padding: 2px 0 0 5px; background: linear-gradient(to right, #e6e6e6 2px, #fafafa 2px); }
.track .thumb { width: 8px; height: 102px; border-radius: 4px; background: #c2c2c2; }
.second .track { margin-top: 44px; }
.first .track { width: 18px; padding: 0 5px; }
.first .track .thumb { height: 23px; border-radius: 0 0 4px 4px; }
.chart text { font: 9px "Liberation Sans", Arial, sans-serif; fill: #555; }
.to-top { position: absolute; right: 49px; bottom: 49px; width: 32px; height: 31px; border-radius: 4px; background: #8f999b; }
.page-scroll { width: 17px; background: #f1f1f1; display: flex; flex-direction: column; align-items: center; padding: 7px 0; color: #505050; }
.page-scroll .thumb { width: 13px; height: 62px; margin: 237px 0 auto; background: #c1c1c1; border: 1px solid #aaa; }
.shelf-dl { height: 44px; flex: none; display: flex; align-items: center; gap: 3px; padding: 0 15px 2px 3px; border-top: 1px solid #cfcfcf; }
.dl { width: 205px; height: 36px; display: flex; background: linear-gradient(#eee, #e2e2e2); border: 1px solid #a5a5a5; border-radius: 3px; }
.dl button:first-child { flex: 1; justify-content: flex-start; gap: 13px; padding-left: 11px; }
.dl .dl-menu { width: 14px; border-left: 1px solid #bcbcbc; color: #666; padding-bottom: 8px; }
.shelf-dl a { margin-left: auto; display: flex; align-items: center; gap: 7px; text-decoration: underline; }
.dl-close { margin-left: 16px; color: #555; }

/* Taskbar */
.taskbar { height: 41px; flex: none; display: flex; align-items: center; padding: 0 12px 0 10px; background: linear-gradient(100deg, #2a4663, #2f5676 35%, #2c4866 50%, #2f4d78 66%, #2b4a69 80%, #2d4a6b); }
.grip { width: 9px; height: 31px; background: radial-gradient(circle, #16283c 1px, transparent 1px) 0 0 / 3px 4px; }
.start { margin-right: 12px; }
.tasks { display: flex; gap: 4px; margin-left: 9px; }
.task { width: 58px; height: 39px; margin-top: 1px; background: rgba(255, 255, 255, .18); border: 1px solid #9aa9b9; }
.task.flat { background: none; border-color: transparent; }
.task.now { background: linear-gradient(#7489a1, #8fa0b4); border-color: #fff; }
.task.stack { width: 50px; margin-right: 8px; box-shadow: 3px 0 0 #5d7390, 4px 0 0 #9aa9b9, 7px 0 0 #5d7390, 8px 0 0 #9aa9b9; }
.java text { font: 700 8px "Open Sans", sans-serif; fill: #f08a2a; text-anchor: middle; }
.tray { margin-left: auto; display: flex; align-items: center; gap: 9px; color: #fff; }
.tray .grip { margin-right: 3px; }
.tray .up { margin: 0 5px; }
.clock { display: flex; flex-direction: column; width: 61px; margin-left: 5px; padding-top: 2px; text-align: center; line-height: 17px; white-space: nowrap; }
```
